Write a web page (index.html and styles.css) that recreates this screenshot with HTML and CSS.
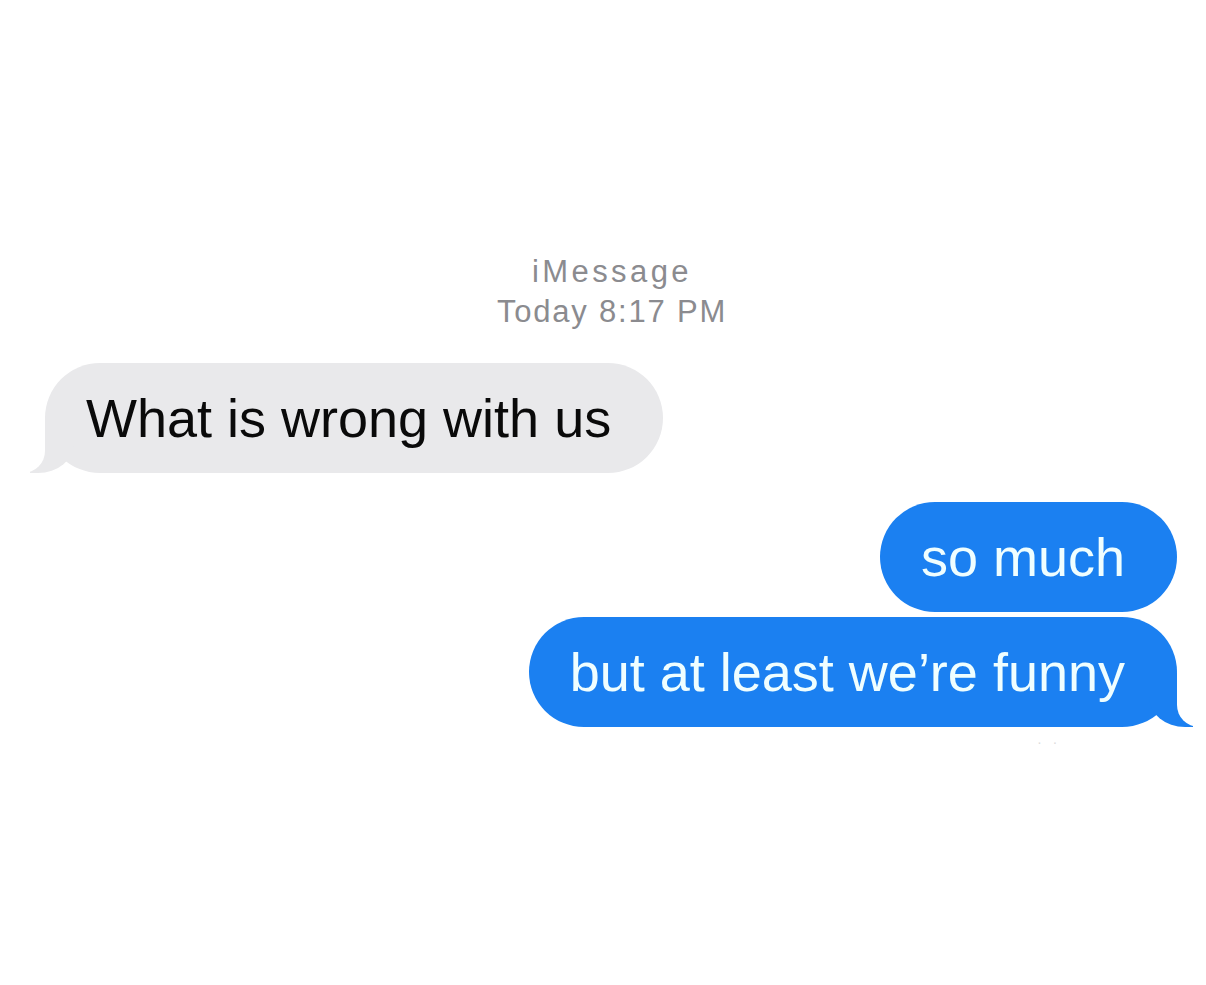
FILE: index.html
```html
<!DOCTYPE html>
<html lang="en">
<head>
  <meta charset="UTF-8">
  <meta name="viewport" content="width=device-width, initial-scale=1.0">
  <title>iMessage</title>
  <link rel="stylesheet" href="styles.css">
</head>
<body>

  <div class="chat">
    <!-- Conversation header -->
    <div class="chat-header">
      <p class="service">iMessage</p>
      <p class="time">Today 8:17 PM</p>
    </div>

    <!-- Messages -->
    <div class="row them">
      <div class="bubble gray tail">What is wrong with us</div>
    </div>

    <div class="row me first">
      <div class="bubble blue">so much</div>
    </div>
    <div class="row me">
      <div class="bubble blue tail">but at least we’re funny</div>
    </div>

    <div class="delivered">. &nbsp; .</div>
  </div>

</body>
</html>
```

FILE: styles.css
```css
body {
  margin: 0;
  background-color: #ffffff;
  font-family: 'Liberation Sans', Arial, sans-serif;
}

.chat {
  display: flex;
  flex-direction: column;
  padding: 252px 29px 0 45px;
}

.chat-header {
  text-align: center;
  color: #8b8b8f;
  font-size: 31px;
  line-height: 40px;
  margin-bottom: 31px;
  padding-left: 2px;
}

.chat-header p {
  margin: 0;
}

.service {
  letter-spacing: 3.4px;
}

.time {
  letter-spacing: 1.8px;
}

.row {
  display: flex;
}

.row.them {
  justify-content: flex-start;
}

.row.me {
  justify-content: flex-end;
}

.row.first {
  margin-top: 29px;
  margin-bottom: 5px;
}

.bubble {
  position: relative;
  height: 110px;
  box-sizing: border-box;
  display: flex;
  align-items: center;
  padding: 0 52px 0 41px;
  border-radius: 55px;
  font-size: 54px;
  white-space: nowrap;
}

.bubble.gray {
  background-color: #e9e9eb;
  color: #0a0a0a;
}

.bubble.blue {
  background-color: #1b80f1;
  color: #effeff;
}

/* bubble tails */
.bubble.tail::before,
.bubble.tail::after {
  content: "";
  position: absolute;
  bottom: 0;
  height: 54px;
}

.them .bubble.tail::before {
  left: -15px;
  width: 44px;
  background-color: #e9e9eb;
  border-bottom-right-radius: 36px 30px;
}

.them .bubble.tail::after {
  left: -56px;
  width: 56px;
  background-color: #ffffff;
  border-bottom-right-radius: 22px;
}

.me .bubble.tail::before {
  right: -16px;
  width: 44px;
  background-color: #1b80f1;
  border-bottom-left-radius: 36px 30px;
}

.me .bubble.tail::after {
  right: -57px;
  width: 57px;
  background-color: #ffffff;
  border-bottom-left-radius: 22px;
}

.delivered {
  align-self: flex-end;
  margin-right: 120px;
  margin-top: 4px;
  color: #dcdcdc;
  font-size: 14px;
}
```
